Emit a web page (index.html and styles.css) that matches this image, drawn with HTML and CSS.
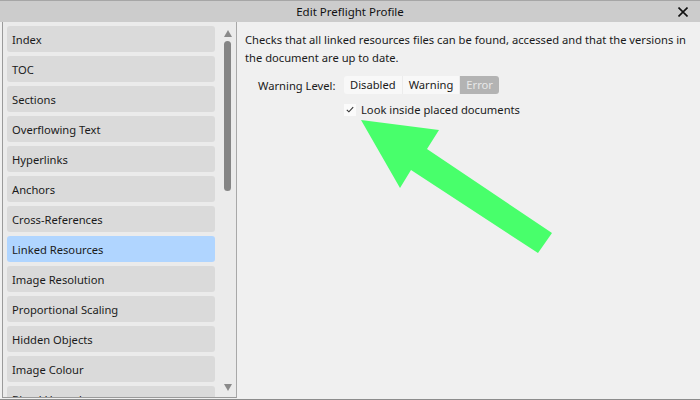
FILE: index.html
```html
<!DOCTYPE html>
<html lang="en">
<head>
    <meta charset="UTF-8">
    <title>Edit Preflight Profile</title>
    <link rel="stylesheet" href="styles.css">
</head>
<body>
    <div class="window">
        <div class="titlebar">
            <span class="title">Edit Preflight Profile</span>
            <svg class="close" width="10" height="10" viewBox="0 0 10 10">
                <path d="M0.5 0.5 L9.5 9.5 M9.5 0.5 L0.5 9.5" stroke="#111" stroke-width="1.6"/>
            </svg>
        </div>
        <div class="main">
            <div class="sidebar">
                <div class="list">
                    <div class="item">Index</div>
                    <div class="item">TOC</div>
                    <div class="item">Sections</div>
                    <div class="item">Overflowing Text</div>
                    <div class="item">Hyperlinks</div>
                    <div class="item">Anchors</div>
                    <div class="item">Cross-References</div>
                    <div class="item selected">Linked Resources</div>
                    <div class="item">Image Resolution</div>
                    <div class="item">Proportional Scaling</div>
                    <div class="item">Hidden Objects</div>
                    <div class="item">Image Colour</div>
                    <div class="item">Bleed Hazards</div>
                </div>
                <div class="scrollbar">
                    <div class="arrow up"></div>
                    <div class="track"><div class="thumb"></div></div>
                    <div class="arrow down"></div>
                </div>
            </div>
            <div class="content">
                <p class="desc">Checks that all linked resources files can be found, accessed and that the versions in the document are up to date.</p>
                <div class="level-row">
                    <span class="label">Warning Level:</span>
                    <div class="segments">
                        <span class="seg">Disabled</span>
                        <span class="seg">Warning</span>
                        <span class="seg active">Error</span>
                    </div>
                </div>
                <div class="check-row">
                    <span class="checkbox">
                        <svg width="8" height="7" viewBox="0 0 8 7"><path d="M0.8 3.8 L2.9 5.8 L7.2 1.2" fill="none" stroke="#333" stroke-width="1.1"/></svg>
                    </span>
                    <span>Look inside placed documents</span>
                </div>
            </div>
        </div>
    </div>
    <svg class="pointer" width="700" height="400" viewBox="0 0 700 400">
        <polygon points="361,120 439,130 427,149 552,233 538,253 411,170 400,188" fill="#48ff6b"/>
    </svg>
</body>
</html>
```

FILE: styles.css
```css
body {
    margin: 0;
    font-family: "Segoe UI", "Noto Sans", sans-serif;
    font-size: 11.2px;
    color: #1a1a1a;
    background: #f0f0f0;
}
.window {
    width: 700px;
    height: 400px;
    display: flex;
    flex-direction: column;
    box-sizing: border-box;
    border-bottom: 1px solid #8c8c8c;
}
.titlebar {
    height: 22px;
    flex: none;
    background: #cccccc;
    border-top: 1px solid #a6a6a6;
    box-sizing: border-box;
    display: flex;
    align-items: center;
    justify-content: center;
    position: relative;
}
.title {
    font-size: 11.5px;
    color: #111;
}
.close {
    position: absolute;
    right: 12px;
    top: 6px;
}
.main {
    flex: 1;
    display: flex;
    min-height: 0;
}
.sidebar {
    width: 235px;
    margin-left: 2px;
    margin-bottom: 1px;
    box-sizing: border-box;
    border-left: 1px solid #9a9a9a;
    border-right: 1px solid #a8a8a8;
    border-bottom: 1px solid #9a9a9a;
    background: #ebebeb;
    display: flex;
    overflow: hidden;
}
.list {
    width: 210px;
    padding: 4px 0 0 4px;
    display: flex;
    flex-direction: column;
    gap: 4px;
}
.item {
    flex: none;
    height: 26px;
    line-height: 27px;
    padding-left: 5px;
    background: #dadada;
    border-radius: 3px;
}
.item.selected {
    background: #b0d5ff;
}
.scrollbar {
    width: 17px;
    margin-left: 4px;
    display: flex;
    flex-direction: column;
    align-items: center;
}
.arrow {
    width: 0;
    height: 0;
    border-left: 4px solid transparent;
    border-right: 4px solid transparent;
    flex: none;
}
.arrow.up {
    border-bottom: 7px solid #8a8a8a;
    margin-top: 8px;
}
.arrow.down {
    border-top: 7px solid #8a8a8a;
    margin-bottom: 6px;
}
.track {
    flex: 1;
    padding-top: 4px;
}
.thumb {
    width: 7px;
    height: 150px;
    border-radius: 4px;
    background: #858585;
}
.content {
    flex: 1;
    padding: 9px 8px 0 8px;
}
.desc {
    margin: 0;
    line-height: 18px;
}
.level-row {
    display: flex;
    align-items: center;
    margin-top: 9px;
    margin-left: 13px;
}
.label {
    width: 86px;
}
.segments {
    display: flex;
    height: 18px;
    border-radius: 3px;
    overflow: hidden;
    background: #f8f8f8;
}
.seg {
    padding: 0 6px 0 6px;
    line-height: 18px;
    border-right: 1px solid #ececec;
}
.seg.active {
    background: #b3b3b3;
    color: #e8e8e8;
    border-right: none;
}
.check-row {
    display: flex;
    align-items: center;
    gap: 5px;
    margin-top: 8px;
    margin-left: 99px;
}
.checkbox {
    width: 12px;
    height: 12px;
    background: #fbfbfb;
    display: flex;
    align-items: center;
    justify-content: center;
}
.pointer {
    position: absolute;
    left: 0;
    top: 0;
}
```
